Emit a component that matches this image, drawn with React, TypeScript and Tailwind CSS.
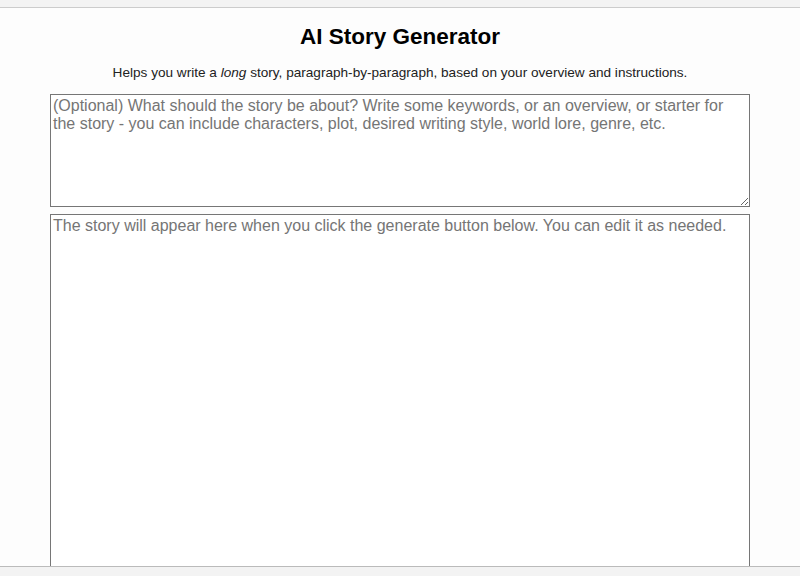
import React from "react";

export default function App() {
  return (
    <div className="min-h-screen bg-[#fdfdfd] text-black" style={{ fontFamily: '"Liberation Sans", Arial, sans-serif' }}>
      <div className="fixed top-0 left-0 right-0 h-[8px] bg-[#f3f3f3] border-b border-[#cccccc] z-10" />
      <div className="pt-[8px]">
        <div className="w-[700px] mx-auto flex flex-col">
          <h1 className="text-center font-bold text-[22.5px] leading-[26px] mt-[16px]">AI Story Generator</h1>
          <p className="text-center text-[13.6px] leading-[16px] mt-[15px] text-[#222222]">
            Helps you write a <i>long</i> story, paragraph-by-paragraph, based on your overview and instructions.
          </p>
          <textarea
            className="mt-[13px] w-[700px] h-[113px] border border-[#767676] px-[2px] py-[2px] text-[16px] leading-[normal] bg-white placeholder:text-[#757575] outline-none"
            style={{ fontFamily: '"Liberation Sans", Arial, sans-serif' }}
            placeholder="(Optional) What should the story be about? Write some keywords, or an overview, or starter for the story - you can include characters, plot, desired writing style, world lore, genre, etc."
          />
          <textarea
            className="mt-[7px] w-[700px] h-[420px] border border-[#767676] px-[2px] py-[2px] text-[16px] leading-[normal] bg-white placeholder:text-[#757575] outline-none resize-none"
            style={{ fontFamily: '"Liberation Sans", Arial, sans-serif' }}
            placeholder="The story will appear here when you click the generate button below. You can edit it as needed."
          />
        </div>
      </div>
      <div className="fixed bottom-0 left-0 right-0 h-[10px] bg-[#f3f3f3] border-t border-[#bbbbbb] z-10" />
    </div>
  );
}
